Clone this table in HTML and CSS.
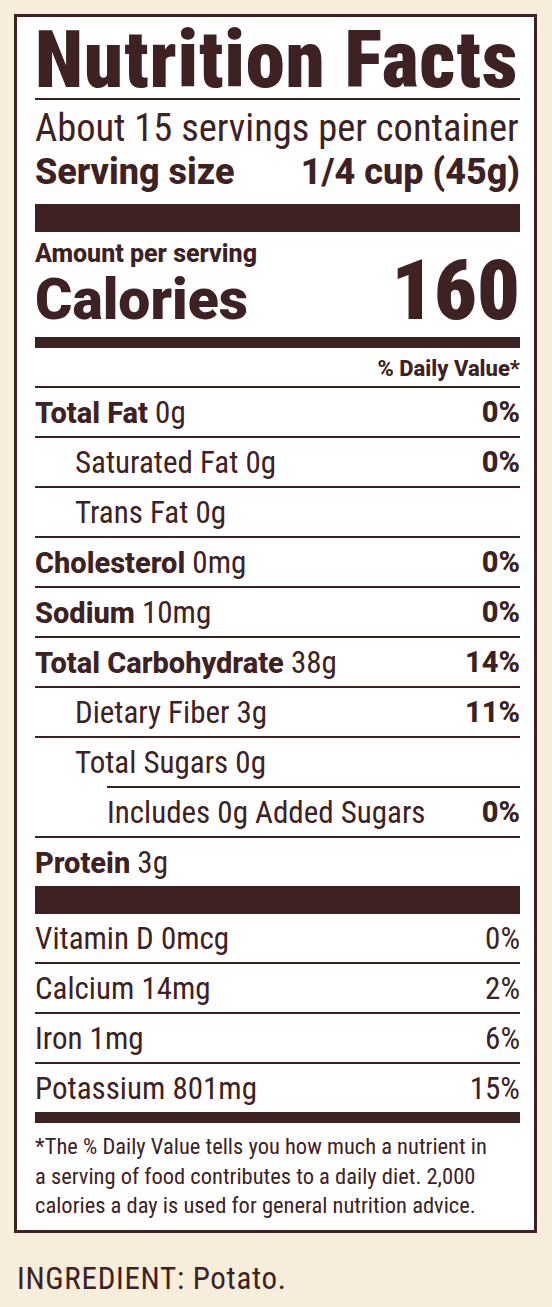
FILE: index.html
```html
<!DOCTYPE html>
<html lang="en">
<head>
  <meta charset="UTF-8" />
  <meta name="viewport" content="width=device-width, initial-scale=1.0"/>
  <title>Nutrition Facts — Potato</title>
  <link rel="stylesheet" href="styles.css">
</head>
<body>
  <div class="label">
    <h1 class="title">Nutrition Facts</h1>

    <div class="servings">
      <p>About 15 servings per container</p>
      <p class="size"><span>Serving size</span><span>1/4 cup (45g)</span></p>
    </div>

    <div class="bar thick"></div>

    <div class="calories">
      <div>
        <p class="amount">Amount per serving</p>
        <p class="cal-label">Calories</p>
      </div>
      <p class="cal-value">160</p>
    </div>

    <div class="bar mid"></div>

    <p class="dv-head">% Daily Value*</p>

    <div class="row"><span><b>Total Fat</b> 0g</span><b>0%</b></div>
    <div class="row"><span class="indent">Saturated Fat 0g</span><b>0%</b></div>
    <div class="row"><span class="indent">Trans Fat 0g</span></div>
    <div class="row"><span><b>Cholesterol</b> 0mg</span><b>0%</b></div>
    <div class="row"><span><b>Sodium</b> 10mg</span><b>0%</b></div>
    <div class="row"><span><b>Total Carbohydrate</b> 38g</span><b>14%</b></div>
    <div class="row"><span class="indent">Dietary Fiber 3g</span><b>11%</b></div>
    <div class="row"><span class="indent">Total Sugars 0g</span></div>
    <div class="row added"><span>Includes 0g Added Sugars</span><b>0%</b></div>
    <div class="row"><span><b>Protein</b> 3g</span></div>

    <div class="bar thick"></div>

    <div class="row first"><span>Vitamin D 0mcg</span><span>0%</span></div>
    <div class="row"><span>Calcium 14mg</span><span>2%</span></div>
    <div class="row"><span>Iron 1mg</span><span>6%</span></div>
    <div class="row"><span>Potassium 801mg</span><span>15%</span></div>

    <div class="bar mid"></div>

    <p class="footnote">
      *The % Daily Value tells you how much a nutrient in<br>
      a serving of food contributes to a daily diet. 2,000<br>
      calories a day is used for general nutrition advice.
    </p>
  </div>

  <p class="ingredient">INGREDIENT: Potato.</p>
</body>
</html>
```

FILE: styles.css
```css
body {
  margin: 0;
  padding: 14px;
  min-height: 1307px;
  box-sizing: border-box;
  background: #f6eedb;
  color: #3e2123;
  font-family: Roboto, "Liberation Sans", sans-serif;
  font-stretch: 75%;
}

p {
  margin: 0;
}

.label {
  width: 523px;
  box-sizing: border-box;
  background: #fff;
  border: 3px solid #3e2123;
  padding: 0 14px 0 18px;
}

.title {
  margin: 0;
  padding-top: 5px;
  font-size: 79px;
  line-height: 76px;
  font-weight: 900;
  letter-spacing: 0.8px;
  white-space: nowrap;
  border-bottom: 2px solid #3e2123;
}

.servings {
  padding-top: 6px;
  font-size: 38.5px;
  line-height: 44px;
}

.size {
  display: flex;
  justify-content: space-between;
  font-size: 36px;
  font-weight: 800;
  font-stretch: 100%;
}

.bar {
  background: #3e2123;
}

.bar.thick {
  height: 28px;
}

.servings + .bar {
  margin-top: 10px;
}

.bar.mid {
  height: 11px;
}

.calories {
  display: flex;
  justify-content: space-between;
  align-items: flex-end;
  padding: 7px 0 6px;
  font-weight: 900;
}

.amount {
  font-size: 25px;
  line-height: 30px;
  font-weight: 800;
  font-stretch: 100%;
}

.cal-label {
  font-size: 57px;
  line-height: 62px;
  font-stretch: 100%;
}

.cal-value {
  font-size: 84px;
  line-height: 80px;
}

.dv-head {
  padding-top: 4px;
  height: 34px;
  line-height: 34px;
  text-align: right;
  font-size: 22px;
  font-weight: 800;
  font-stretch: 100%;
}

.row {
  display: flex;
  justify-content: space-between;
  align-items: center;
  height: 48px;
  border-top: 2px solid #3e2123;
  font-size: 31px;
}

.row.first {
  border-top: none;
}

.row b {
  font-size: 29px;
  font-weight: 800;
  font-stretch: 100%;
}

.indent {
  padding-left: 40px;
}

.row.added {
  margin-left: 72px;
}

.footnote {
  padding: 9px 0;
  font-size: 22.5px;
  line-height: 29.5px;
  white-space: nowrap;
}

.ingredient {
  margin: 28px 0 0 3px;
  font-size: 31px;
  line-height: 36px;
  letter-spacing: 0.7px;
}
```
